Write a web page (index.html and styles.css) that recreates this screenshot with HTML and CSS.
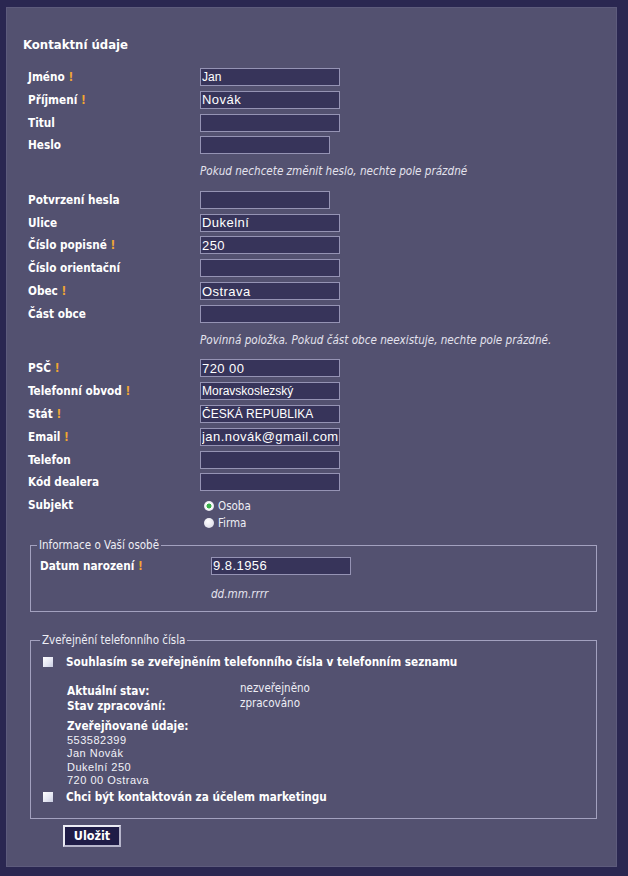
FILE: index.html
```html
<!DOCTYPE html>
<html lang="cs">
<head>
<meta charset="utf-8">
<title>Kontaktní údaje</title>
<link rel="stylesheet" href="styles.css">
</head>
<body>
<div class="panel">
  <h2 class="title">Kontaktní údaje</h2>
  <div class="form">
    <div class="row"><span class="label">Jméno <b class="req">!</b></span><input class="field" value="Jan"></div>
    <div class="row"><span class="label">Příjmení <b class="req">!</b></span><input class="field big" value="Novák"></div>
    <div class="row"><span class="label">Titul</span><input class="field" value=""></div>
    <div class="row"><span class="label">Heslo</span><input class="field short" type="password" value=""></div>
    <div class="hint">Pokud nechcete změnit heslo, nechte pole prázdné</div>
    <div class="row"><span class="label">Potvrzení hesla</span><input class="field short" type="password" value=""></div>
    <div class="row"><span class="label">Ulice</span><input class="field big" value="Dukelní"></div>
    <div class="row"><span class="label">Číslo popisné <b class="req">!</b></span><input class="field big" value="250"></div>
    <div class="row"><span class="label">Číslo orientační</span><input class="field" value=""></div>
    <div class="row"><span class="label">Obec <b class="req">!</b></span><input class="field big" value="Ostrava"></div>
    <div class="row"><span class="label">Část obce</span><input class="field" value=""></div>
    <div class="hint">Povinná položka. Pokud část obce neexistuje, nechte pole prázdné.</div>
    <div class="row"><span class="label">PSČ <b class="req">!</b></span><input class="field big" value="720 00"></div>
    <div class="row"><span class="label">Telefonní obvod <b class="req">!</b></span><input class="field" value="Moravskoslezský"></div>
    <div class="row"><span class="label">Stát <b class="req">!</b></span><input class="field" value="ČESKÁ REPUBLIKA"></div>
    <div class="row"><span class="label">Email <b class="req">!</b></span><input class="field big" value="jan.novák@gmail.com"></div>
    <div class="row"><span class="label">Telefon</span><input class="field" value=""></div>
    <div class="row"><span class="label">Kód dealera</span><input class="field" value=""></div>
    <div class="row subj">
      <span class="label">Subjekt</span>
      <div class="radios">
        <label class="opt"><input type="radio" name="subjekt" class="radio" checked>Osoba</label>
        <label class="opt"><input type="radio" name="subjekt" class="radio">Firma</label>
      </div>
    </div>
  </div>

  <fieldset class="box box1">
    <legend class="legend">Informace o Vaší osobě</legend>
    <div class="row inner"><span class="label">Datum narození <b class="req">!</b></span><input class="field big" value="9.8.1956"></div>
    <div class="hint inner-hint">dd.mm.rrrr</div>
  </fieldset>

  <fieldset class="box box2">
    <legend class="legend">Zveřejnění telefonního čísla</legend>
    <label class="check"><input type="checkbox" class="cb"><span class="label">Souhlasím se zveřejněním telefonního čísla v telefonním seznamu</span></label>
    <div class="status">
      <span class="label">Aktuální stav:</span><span class="val">nezveřejněno</span>
      <span class="label">Stav zpracování:</span><span class="val">zpracováno</span>
    </div>
    <div class="published">
      <div class="label">Zveřejňované údaje:</div>
      <div class="addr">553582399</div>
      <div class="addr">Jan Novák</div>
      <div class="addr">Dukelní 250</div>
      <div class="addr">720 00 Ostrava</div>
    </div>
    <label class="check check2"><input type="checkbox" class="cb"><span class="label">Chci být kontaktován za účelem marketingu</span></label>
  </fieldset>

  <div class="actions"><button class="save" type="button">Uložit</button></div>
</div>
</body>
</html>
```

FILE: styles.css
```css
html, body {
  margin: 0;
  padding: 0;
}
body {
  background: #2a2751;
  width: 628px;
  height: 876px;
  overflow: hidden;
  font-family: "DejaVu Sans Condensed", "DejaVu Sans", sans-serif;
  font-stretch: condensed;
  color: #ffffff;
}
.panel {
  margin: 7px 11px 0 6px;
  height: 860px;
  box-sizing: border-box;
  background: #535170;
  border: 1px solid #5d5b7c;
  padding: 29px 0 0 16px;
}
.title {
  margin: 0;
  font-size: 13px;
  line-height: 16px;
  font-weight: bold;
}
.form {
  margin-top: 15px;
  padding-left: 5px;
}
.row {
  display: grid;
  grid-template-columns: 172px 1fr;
  align-items: start;
  height: 22.8px;
}
.label {
  font-size: 11.7px;
  font-weight: bold;
  line-height: 18px;
  white-space: nowrap;
}
.req {
  color: #f0a632;
}
.field {
  box-sizing: border-box;
  width: 140px;
  height: 18px;
  margin: 0;
  padding: 0 0 0 1px;
  background: #37345a;
  border: 1px solid #9593b4;
  border-radius: 0;
  color: #ffffff;
  font-family: "Liberation Sans", Arial, sans-serif;
  font-size: 12px;
  font-stretch: normal;
  outline: none;
}
.field.big {
  font-size: 13px;
  letter-spacing: 0.45px;
}
.field.short {
  width: 130px;
}
.hint {
  height: 31.7px;
  box-sizing: border-box;
  padding: 5px 0 0 172px;
  font-size: 11.6px;
  line-height: 14px;
  font-style: italic;
  color: #e4e3ee;
}
.subj {
  height: auto;
}
.radios {
  display: flex;
  flex-direction: column;
  padding-top: 1.5px;
}
.opt {
  display: flex;
  align-items: center;
  height: 17px;
  font-size: 11.5px;
  color: #eeeef5;
  margin-left: 4px;
}
.radio {
  appearance: none;
  -webkit-appearance: none;
  width: 10px;
  height: 10px;
  margin: 0 4px 0 0;
  border-radius: 50%;
  background: radial-gradient(circle at 40% 35%, #ffffff 0%, #e6e6ee 60%, #c9c9d8 100%);
  border: none;
}
.radio:checked {
  background: radial-gradient(circle, #38b04a 0 2.2px, #ffffff 2.8px, #e8e8f0 70%, #c9c9d8 100%);
}
.box {
  margin: 0 0 0 7px;
  width: 567px;
  box-sizing: border-box;
  border: 1px solid #a3a1bf;
  padding: 0 0 0 9px;
  min-width: 0;
}
.box1 {
  margin-top: 7px;
  height: 73px;
}
.box2 {
  margin-top: 22px;
  height: 185px;
  padding-left: 12px;
}
.legend {
  margin-left: -3px;
  padding: 0 2px;
  font-size: 11.5px;
  line-height: 13px;
  color: #eeeef5;
}
.inner {
  margin-top: 5px;
  grid-template-columns: 171px 1fr;
}
.inner-hint {
  padding: 8px 0 0 171px;
  height: auto;
}
.check {
  display: flex;
  align-items: center;
  height: 18px;
  margin-top: 6px;
}
.cb {
  appearance: none;
  -webkit-appearance: none;
  width: 10px;
  height: 10px;
  margin: 0 13px 0 0;
  background: linear-gradient(135deg, #ffffff 0%, #e4e6f2 60%, #c8cce0 100%);
  border: none;
  border-radius: 0;
}
.status {
  display: grid;
  grid-template-columns: 173px 1fr;
  margin: 13px 0 0 24px;
}
.status .label {
  line-height: 15px;
}
.status .val {
  font-size: 11.5px;
  line-height: 9px;
  color: #eeeef5;
}
.published {
  margin: 5px 0 0 24px;
}
.published .label {
  line-height: 15px;
}
.addr {
  font-family: "Liberation Sans", Arial, sans-serif;
  font-stretch: normal;
  font-size: 11px;
  letter-spacing: 0.5px;
  line-height: 13.5px;
  color: #f2f2f8;
}
.check2 {
  margin-top: 0;
}
.actions {
  padding: 6px 0 0 40px;
}
.save {
  width: 58px;
  height: 22px;
  box-sizing: border-box;
  background: #1f1c47;
  border: 2px solid #ececf4;
  border-right-color: #b7b6cc;
  border-bottom-color: #b7b6cc;
  color: #ffffff;
  font-family: "DejaVu Sans Condensed", "DejaVu Sans", sans-serif;
  font-stretch: condensed;
  font-weight: bold;
  font-size: 12.5px;
  padding: 0;
}
```
